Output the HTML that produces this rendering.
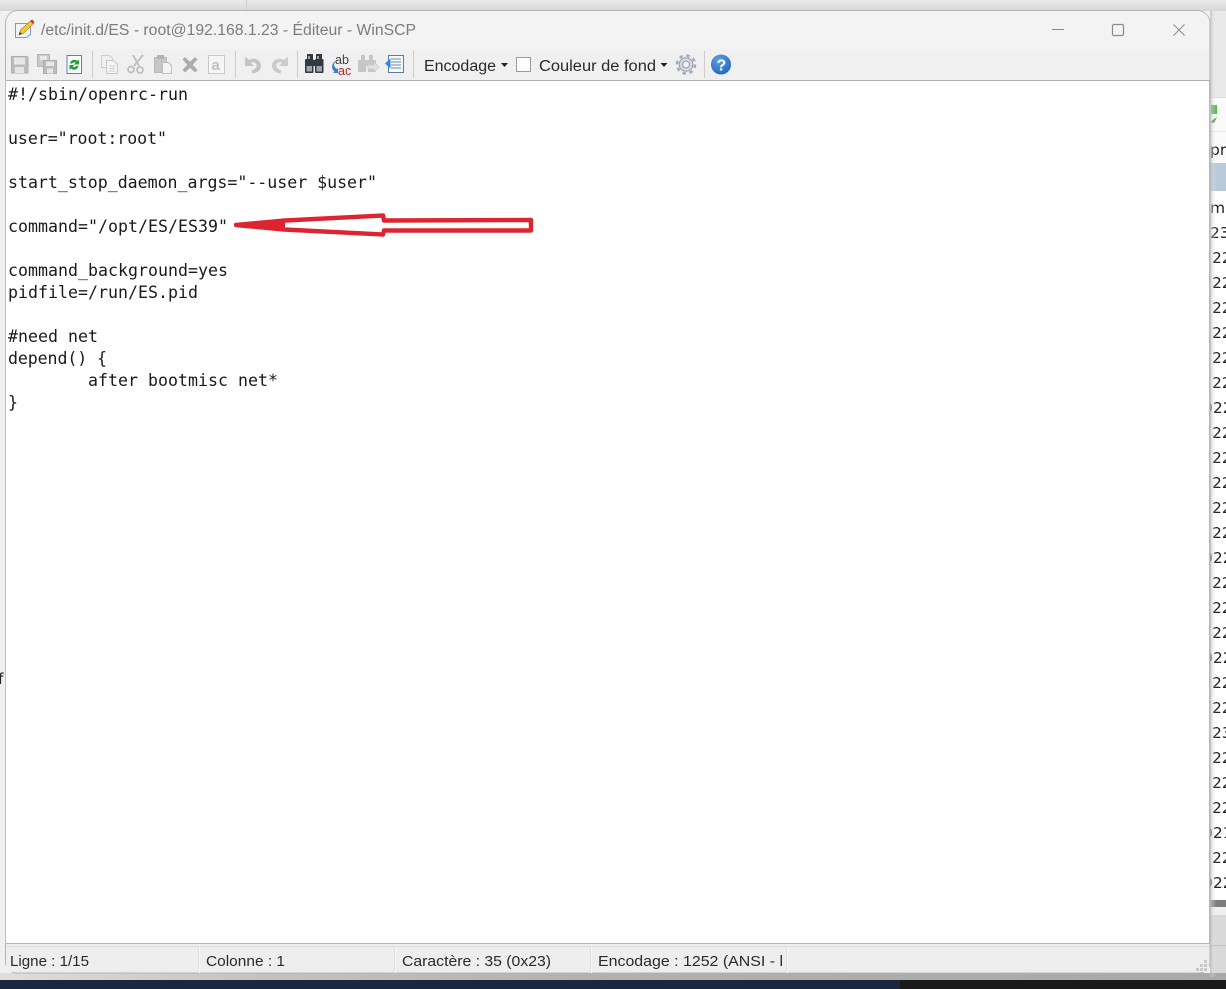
<!DOCTYPE html>
<html>
<head>
<meta charset="utf-8">
<style>
html,body{margin:0;padding:0;width:1226px;height:989px;overflow:hidden;background:#f1f1f1}
svg{display:block;position:absolute;left:0;top:0}
.ui{font-family:"Liberation Sans",sans-serif}
.code{font-family:"DejaVu Sans Mono","Liberation Mono",monospace;font-size:16.6px;fill:#1a1a1a}
.bg{font-family:"DejaVu Sans","Liberation Sans",sans-serif;font-size:15.5px;fill:#222}
</style>
</head>
<body>
<svg width="1226" height="989" viewBox="0 0 1226 989" xmlns="http://www.w3.org/2000/svg">
<defs>
<linearGradient id="top" x1="0" y1="0" x2="0" y2="1"><stop offset="0" stop-color="#ebebeb"/><stop offset="1" stop-color="#d6d6d6"/></linearGradient>
<linearGradient id="sh" x1="0" y1="0" x2="1" y2="0"><stop offset="0" stop-color="#b5b5b5"/><stop offset="1" stop-color="#f3f3f3" stop-opacity="0"/></linearGradient>
<linearGradient id="bot" x1="0" y1="0" x2="1" y2="0"><stop offset="0" stop-color="#dedede"/><stop offset=".2" stop-color="#c4c4c4"/><stop offset=".5" stop-color="#b0b0b0"/><stop offset="1" stop-color="#a9a9a9"/></linearGradient>
<radialGradient id="help" cx=".4" cy=".3" r=".8"><stop offset="0" stop-color="#5ea3e8"/><stop offset="1" stop-color="#1c62b8"/></radialGradient>
</defs>

<!-- desktop behind -->
<rect x="0" y="0" width="1226" height="989" fill="#f0f0f0"/>
<rect x="0" y="0" width="1226" height="11" fill="url(#top)"/>
<rect x="246" y="0" width="1" height="10" fill="#cfcfcf"/>
<rect x="1210" y="11" width="16" height="86" fill="#e9e9e9"/>
<rect x="1210" y="97" width="16" height="66" fill="#fafafa"/>
<rect x="1210" y="97" width="16" height="1" fill="#dcdcdc"/>
<rect x="1210" y="131" width="16" height="1" fill="#e8e8e8"/>
<rect x="1210" y="163" width="16" height="28" fill="#b9c9da"/>
<rect x="1210" y="191" width="16" height="709" fill="#fff"/>
<rect x="1210" y="900" width="16" height="7" fill="#7d7d7d"/>
<rect x="1210" y="907" width="16" height="8" fill="#efefef"/>
<rect x="1210" y="915" width="16" height="62" fill="#d9d9d9"/>
<rect x="1210" y="945" width="16" height="1" fill="#c4c4c4"/>
<rect x="0" y="973" width="1226" height="8" fill="url(#bot)"/>
<rect x="0" y="980" width="1226" height="9" fill="#1b2740"/>
<rect x="900" y="980" width="326" height="9" fill="#1a1a1c"/>

<!-- text behind on the right -->
<path d="M1211 105h6v9h-6z" fill="#58b858"/>
<path d="M1210 122l7-5-3 6z" fill="#3f9a3f"/>
<g class="bg">
<text x="1210" y="155">pr</text>
<text x="1210" y="213">mo</text>
<text x="1210" y="238">23</text>
<text x="1212" y="263">22</text>
<text x="1212" y="288">22</text>
<text x="1212" y="313">22</text>
<text x="1212" y="338">22</text>
<text x="1212" y="363">22</text>
<text x="1212" y="388">22</text>
<text x="1203" y="413">022</text>
<text x="1212" y="438">22</text>
<text x="1212" y="463">22</text>
<text x="1212" y="488">22</text>
<text x="1212" y="513">22</text>
<text x="1212" y="538">22</text>
<text x="1203" y="563">022</text>
<text x="1212" y="588">22</text>
<text x="1212" y="613">22</text>
<text x="1212" y="638">22</text>
<text x="1203" y="663">022</text>
<text x="1212" y="688">22</text>
<text x="1212" y="713">22</text>
<text x="1212" y="738">23</text>
<text x="1212" y="763">22</text>
<text x="1212" y="788">22</text>
<text x="1212" y="813">22</text>
<text x="1203" y="838">021</text>
<text x="1212" y="863">22</text>
<text x="1203" y="888">022</text>
<text x="-2" y="684">f</text>
</g>

<!-- shadow strip -->
<rect x="1210" y="11" width="6" height="966" fill="url(#sh)" opacity=".7"/>

<!-- window -->
<path d="M5.500 24a13 13 0 0 1 13-13.500H1197a13 13 0 0 1 13 13.500V962a11 11 0 0 1-11 11H16.500a11 11 0 0 1-11-11z" fill="#f0f0f0" stroke="#b3b3b3"/>
<path d="M6 24a12 12 0 0 1 12-13H1197a12 12 0 0 1 12.500 13V49H6z" fill="#f3f3f3"/>

<!-- title icon -->
<path d="M15.500 23.500h15v11l-4 3h-11z" fill="#eef5fb" stroke="#7b9dbd"/>
<path d="M19 35l1.500-5 10-9 3 2.500-10 10z" fill="#f2c63e" stroke="#b58a25" stroke-width=".7"/>
<path d="M30 21l2-1.500 2.500 2.500-1.500 2z" fill="#c8343c"/>
<path d="M19 35l.8-3 2.200 1.800z" fill="#333"/>

<text class="ui" x="41" y="35" font-size="15.500" fill="#7c7c7c" textLength="375" lengthAdjust="spacingAndGlyphs">/etc/init.d/ES - root@192.168.1.23 - Éditeur - WinSCP</text>

<!-- window controls -->
<rect x="1052" y="29" width="12" height="1" fill="#8a8a8a"/>
<rect x="1112.500" y="24.500" width="11" height="11" rx="1.500" fill="none" stroke="#8a8a8a" stroke-width="1.200"/>
<path d="M1173.500 24.500l11 11m0-11l-11 11" stroke="#8a8a8a" stroke-width="1" fill="none"/>

<!-- toolbar separators -->
<g fill="#cdcdcd">
<rect x="92" y="51" width="1" height="27"/>
<rect x="235" y="51" width="1" height="27"/>
<rect x="297" y="51" width="1" height="27"/>
<rect x="413" y="51" width="1" height="27"/>
<rect x="704" y="51" width="1" height="27"/>
</g>

<!-- save -->
<path d="M11.500 56.500h15a1.500 1.500 0 0 1 1.500 1.500v15h-16.500z" fill="#bdbdbd" stroke="#adadad"/>
<rect x="14" y="57.500" width="11" height="7" fill="#e8e8e8"/>
<rect x="15" y="67" width="9" height="6" fill="#e6e6e6"/>
<!-- save all -->
<rect x="37.500" y="54.500" width="12" height="12" fill="#cacaca" stroke="#b5b5b5"/>
<rect x="40" y="56" width="7" height="4" fill="#e8e8e8"/>
<rect x="43.500" y="60.500" width="13" height="13" fill="#bbb" stroke="#adadad"/>
<rect x="46" y="61.500" width="8" height="4.500" fill="#e8e8e8"/>
<rect x="47" y="68.500" width="6" height="5" fill="#e6e6e6"/>
<!-- reload -->
<rect x="67" y="55.500" width="14.500" height="18" fill="#f7fbff" stroke="#5a86ad"/>
<path d="M70 63.500a4.500 4.500 0 0 1 7.500-2.500l1.500-1.500v5h-5l1.700-1.700a2.500 2.500 0 0 0-3.400 .7z" fill="#2f9a3e"/>
<path d="M78.500 66a4.500 4.500 0 0 1-7.500 2.500l-1.500 1.500v-5h5l-1.700 1.700a2.500 2.500 0 0 0 3.400-.7z" fill="#2f9a3e"/>

<!-- copy -->
<path d="M101.500 55.500h8l3 3v9h-11z" fill="#f0f0f0" stroke="#cfcfcf"/>
<path d="M106.500 60.500h7l4 4v9h-11z" fill="#f4f4f4" stroke="#c6c6c6"/>
<path d="M109 66h6m-6 2.500h6m-6 2.500h6" stroke="#d0d0d0"/>
<!-- cut -->
<path d="M143 55l-9 11m-1-11l6 11" stroke="#bdbdbd" stroke-width="1.800" fill="none"/>
<circle cx="131" cy="69.500" r="3" fill="none" stroke="#bdbdbd" stroke-width="1.700"/>
<circle cx="140" cy="70" r="3" fill="none" stroke="#bdbdbd" stroke-width="1.700"/>
<!-- paste -->
<rect x="154.500" y="57.500" width="12" height="15" fill="#c6c6c6" stroke="#bbb"/>
<rect x="157" y="55" width="7" height="4" fill="#b2b2b2"/>
<path d="M162.500 62.500h6l3 3v8h-9z" fill="#f4f4f4" stroke="#bfbfbf"/>
<!-- delete -->
<path d="M182.500 59.500l2.500-2.500 5 4.800 5-4.800 2.500 2.500-4.800 5.200 4.800 5.300-2.500 2.500-5-4.800-5 4.800-2.500-2.500 4.800-5.300z" fill="#acacac"/>
<!-- select all -->
<rect x="208.500" y="55.500" width="16" height="18" fill="#f6f6f6" stroke="#cacaca"/>
<text class="ui" x="211.500" y="70" font-size="15" font-weight="bold" fill="#c0c0c0">a</text>

<!-- undo -->
<path d="M245 57v9h9l-3-3c3-2 6.500 .4 5.500 3.500-.7 2.300-2.800 3.300-5 3.700l1 3.300c4.500-.5 8.400-3.300 8.500-7.800.1-5.700-6.800-9-11.500-5.700z" fill="#c4c4c4"/>
<!-- redo -->
<path d="M288 57v9h-9l3-3c-3-2-6.500 .4-5.500 3.500 .7 2.300 2.800 3.300 5 3.700l-1 3.300c-4.500-.5-8.400-3.300-8.500-7.800-.1-5.700 6.800-9 11.500-5.700z" fill="#cbcbcb"/>

<!-- find -->
<g fill="#34393f">
<rect x="307" y="54" width="6" height="6"/><rect x="316" y="54" width="6" height="6"/>
<rect x="305" y="59" width="8.500" height="14" rx="1"/><rect x="315" y="59" width="8.500" height="14" rx="1"/>
<rect x="312" y="60" width="4" height="6"/>
</g>
<path d="M308 56h2v3h-2zM317 56h2v3h-2z" fill="#9aa4ae"/>
<rect x="306.500" y="66" width="5.500" height="5.500" fill="#9aa4ae"/><rect x="316.500" y="66" width="5.500" height="5.500" fill="#9aa4ae"/>
<!-- replace -->
<text class="ui" x="335" y="64" font-size="12.500" fill="#444">ab</text>
<text class="ui" x="338" y="75" font-size="12.500" fill="#b3262e">ac</text>
<path d="M338 60c-5 2-5 7-1 9l1-1v5h-5l1.500-1.500c-4-3-3-10 3.500-11.500z" fill="#3a7cc9"/>
<!-- find next disabled -->
<g fill="#c6c6c6">
<rect x="361" y="55" width="4" height="5"/><rect x="369" y="55" width="4" height="5"/>
<rect x="358" y="60" width="8" height="12" rx="1"/><rect x="368" y="60" width="8" height="12" rx="1"/>
<rect x="365" y="60" width="4" height="6"/>
</g>
<path d="M368 65h6v-3l5 5-5 5v-3h-6z" fill="#e2e2e2" stroke="#c9c9c9" stroke-width=".7"/>
<!-- goto line -->
<rect x="388.500" y="55.500" width="15" height="17" fill="#f3f8fc" stroke="#5c7c9c"/>
<path d="M391 59h10M391 62h10M391 65h10M391 68h10" stroke="#6f8faf"/>
<path d="M385 63.500l5.500-5v10z" fill="#2e86dc"/>

<!-- text tools -->
<text class="ui" x="424" y="71" font-size="15.500" fill="#2a2a2a" textLength="72" lengthAdjust="spacingAndGlyphs">Encodage</text>
<path d="M501 63h7l-3.500 4z" fill="#222"/>
<rect x="516.500" y="57.500" width="14" height="14" fill="#fff" stroke="#9a9a9a"/>
<text class="ui" x="539" y="71" font-size="15.500" fill="#2a2a2a" textLength="117" lengthAdjust="spacingAndGlyphs">Couleur de fond</text>
<path d="M660.500 63h7l-3.500 4z" fill="#222"/>

<!-- gear -->
<circle cx="686" cy="64.500" r="6.800" fill="#d3d8de" stroke="#96a0aa" stroke-width="1"/>
<circle cx="686" cy="64.500" r="9" fill="none" stroke="#a4adb6" stroke-width="2.600" stroke-dasharray="3.500 3.570"/>
<circle cx="686" cy="64.500" r="3.400" fill="#f2f2f2" stroke="#96a0aa"/>

<!-- help -->
<circle cx="721" cy="64.500" r="10" fill="url(#help)"/>
<text class="ui" x="716.500" y="70.500" font-size="16" font-weight="bold" fill="#fff">?</text>

<!-- editor -->
<rect x="6" y="80" width="1203.500" height="863" fill="#fff"/>
<rect x="5" y="80" width="1205" height="1" fill="#b0b0b0"/>
<rect x="5" y="943" width="1205" height="1" fill="#b5b5b5"/>
<rect x="5" y="80" width="1" height="864" fill="#c0c0c0"/>
<rect x="1209" y="80" width="1" height="864" fill="#b8b8b8"/>

<g class="code">
<text x="8" y="100" textLength="180">#!/sbin/openrc-run</text>
<text x="8" y="144" textLength="159">user="root:root"</text>
<text x="8" y="188" textLength="369">start_stop_daemon_args="--user $user"</text>
<text x="8" y="232" textLength="220">command="/opt/ES/ES39"</text>
<text x="8" y="276" textLength="220">command_background=yes</text>
<text x="8" y="298" textLength="190">pidfile=/run/ES.pid</text>
<text x="8" y="342" textLength="90">#need net</text>
<text x="8" y="364" textLength="99">depend() {</text>
<text x="88" y="386" textLength="190">after bootmisc net*</text>
<text x="8" y="408">}</text>
</g>

<!-- arrow -->
<path d="M236 225L285 220.500L383 215.500L384 220.500L531 220V230.500H384L383 234.500L284 229.500Z" fill="none" stroke="#de2430" stroke-width="4.400" stroke-linejoin="round"/>
<path d="M235 225L284 220.500V229.500Z" fill="#de2430" stroke="#de2430" stroke-width="2" stroke-linejoin="round"/>

<!-- status bar -->
<rect x="6" y="944" width="1203" height="28" fill="#eeeeee"/>
<g fill="#dedede">
<rect x="6" y="946" width="1203" height="1"/>
<rect x="198" y="946" width="1" height="27"/>
<rect x="199" y="946" width="1" height="27" fill="#f8f8f8"/>
<rect x="394" y="946" width="1" height="27"/>
<rect x="395" y="946" width="1" height="27" fill="#f8f8f8"/>
<rect x="590" y="946" width="1" height="27"/>
<rect x="591" y="946" width="1" height="27" fill="#f8f8f8"/>
<rect x="786" y="946" width="1" height="27"/>
<rect x="787" y="946" width="1" height="27" fill="#f8f8f8"/>
</g>
<g class="ui" font-size="15" fill="#2a2a2a">
<text x="10" y="966" textLength="79" lengthAdjust="spacingAndGlyphs">Ligne : 1/15</text>
<text x="206" y="966" textLength="79" lengthAdjust="spacingAndGlyphs">Colonne : 1</text>
<text x="402" y="966" textLength="149" lengthAdjust="spacingAndGlyphs">Caractère : 35 (0x23)</text>
<text x="598" y="966" textLength="185" lengthAdjust="spacingAndGlyphs">Encodage : 1252  (ANSI - l</text>
</g>
<g fill="#c8c8c8">
<rect x="1204" y="960" width="3" height="3"/>
<rect x="1200" y="964" width="3" height="3"/><rect x="1204" y="964" width="3" height="3"/>
<rect x="1196" y="968" width="3" height="3"/><rect x="1200" y="968" width="3" height="3"/><rect x="1204" y="968" width="3" height="3"/>
</g>
</svg>
</body>
</html>
